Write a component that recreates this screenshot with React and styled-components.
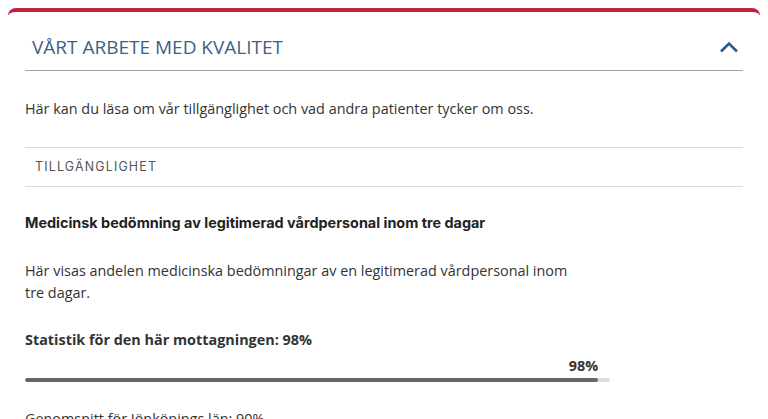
import React from "react";
import styled, { createGlobalStyle } from "styled-components";

const GlobalStyle = createGlobalStyle`
  body {
    margin: 8px;
    background: #fff;
    font-family: "Open Sans", "Liberation Sans", sans-serif;
    color: #333;
  }
  * { box-sizing: border-box; }
`;

const Card = styled.section`
  background: #fff;
  border-top: 4px solid #c52040;
  border-radius: 8px 8px 0 0;
  box-shadow: 0 1px 4px rgba(0, 0, 0, 0.18);
  padding: 0 17px;
  height: 420px;
  overflow: hidden;
`;

const Header = styled.div`
  display: flex;
  align-items: center;
  justify-content: space-between;
  padding: 22px 4px 10px 7px;
  border-bottom: 1px solid #a3a3a3;
`;

const Title = styled.h2`
  margin: 0;
  font-size: 19px;
  line-height: 26px;
  font-weight: 400;
  color: #3d5f8a;
`;

const Chevron = styled.svg`
  width: 20px;
  height: 12px;
  display: block;
`;

const Intro = styled.p`
  margin: 27px 0 27px;
  font-size: 14.4px;
  line-height: 22px;
`;

const SectionLabel = styled.div`
  border-top: 1px solid #dcdcdc;
  border-bottom: 1px solid #dcdcdc;
  padding: 11px 10px;
  font-family: Inter, "Liberation Sans", sans-serif;
  font-size: 12.4px;
  line-height: 16px;
  letter-spacing: 1.2px;
  color: #555;
`;

const Heading = styled.h3`
  margin: 25px 0 0;
  font-family: Inter, "Liberation Sans", sans-serif;
  font-size: 14.4px;
  line-height: 22px;
  font-weight: 700;
  color: #222;
`;

const Text = styled.p`
  margin: ${p => p.$top || 26}px 0 0;
  max-width: 555px;
  font-size: 14.4px;
  line-height: 22px;
  font-weight: ${p => (p.$bold ? 700 : 400)};
`;

const Progress = styled.div`
  width: 585px;
  margin-top: 5px;
`;

const ValueLabel = styled.div`
  text-align: right;
  font-size: 14.4px;
  font-weight: 700;
  line-height: 20px;
`;

const Track = styled.div`
  margin-top: 2px;
  height: 4px;
  border-radius: 2px;
  background: #dcdcdc;
  overflow: hidden;
`;

const Fill = styled.div`
  height: 100%;
  border-radius: 2px;
  background: #666;
`;

const value = 98;

export default function App() {
  return (
    <>
      <GlobalStyle />
      <Card>
        <Header>
          <Title>VÅRT ARBETE MED KVALITET</Title>
          <Chevron viewBox="0 0 20 12">
            <path
              d="M2 10.5 L10 2.5 L18 10.5"
              fill="none"
              stroke="#2d5b8c"
              strokeWidth="2.6"
            />
          </Chevron>
        </Header>
        <Intro>
          Här kan du läsa om vår tillgänglighet och vad andra patienter tycker om oss.
        </Intro>
        <SectionLabel>TILLGÄNGLIGHET</SectionLabel>
        <Heading>
          Medicinsk bedömning av legitimerad vårdpersonal inom tre dagar
        </Heading>
        <Text>
          Här visas andelen medicinska bedömningar av en legitimerad vårdpersonal inom
          tre dagar.
        </Text>
        <Text $bold $top={25}>Statistik för den här mottagningen: {value}%</Text>
        <Progress>
          <ValueLabel style={{ width: `${value}%` }}>{value}%</ValueLabel>
          <Track>
            <Fill style={{ width: `${value}%` }} />
          </Track>
        </Progress>
        <Text $top={26}>Genomsnitt för Jönköpings län: 90%</Text>
      </Card>
    </>
  );
}
